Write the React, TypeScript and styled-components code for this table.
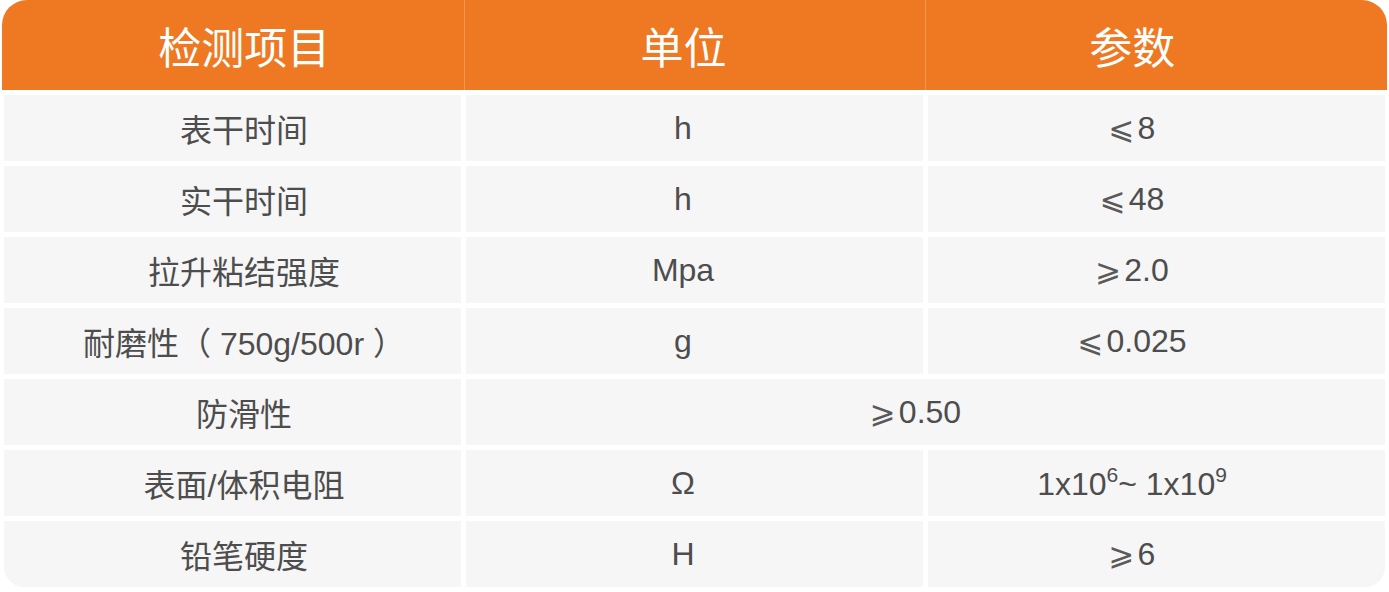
import React from 'react';
import styled, { createGlobalStyle } from 'styled-components';

const GlobalStyle = createGlobalStyle`
  html, body {
    margin: 0;
    padding: 0;
    background: #ffffff;
  }
`;

const Page = styled.div`
  width: 1389px;
  height: 592px;
  padding: 0 2px;
  box-sizing: border-box;
  font-family: "Liberation Sans", "Noto Sans CJK SC", sans-serif;
`;

// text in the reference sits a little off the cell centres
const colPad = ['0 0 0 23px', '0 23px 0 0', '0 49px 0 0'];

const Header = styled.div`
  display: grid;
  grid-template-columns: 1fr 1fr 1fr;
  height: 90px;
  background: #ee7922;
  border-radius: 25px 25px 0 0;
  overflow: hidden;
`;

const HeadCell = styled.div<{ $col: number }>`
  display: flex;
  align-items: center;
  justify-content: center;
  color: #ffffff;
  font-family: "Noto Sans CJK SC", sans-serif;
  font-size: 43px;
  padding: ${(p) => colPad[p.$col]};
  border-left: ${(p) => (p.$col === 0 ? 'none' : '1px solid rgba(255, 255, 255, 0.22)')};
`;

const Body = styled.div`
  display: grid;
  grid-template-columns: repeat(3, 457px);
  grid-auto-rows: 66px;
  column-gap: 5px;
  row-gap: 5px;
  padding: 5px 2px 0;
`;

const Cell = styled.div<{ $col: number; $span?: number; $corner?: 'left' | 'right' }>`
  display: flex;
  align-items: center;
  justify-content: center;
  box-sizing: border-box;
  background: #f6f6f6;
  color: #4d4d4d;
  font-size: 32px;
  padding: ${(p) => (p.$span ? '0 20px 0 0' : colPad[p.$col])};
  grid-column: ${(p) => (p.$span ? `span ${p.$span}` : 'auto')};
  border-radius: ${(p) =>
    p.$corner === 'left' ? '0 0 0 20px' : p.$corner === 'right' ? '0 0 20px 0' : '0'};
`;

const Value = styled.span`
  white-space: nowrap;
`;

const Sym = styled.span`
  font-family: "DejaVu Sans", sans-serif;
  font-size: 31px;
  color: #5a5a5a;
  margin-right: 3px;
`;

const Sup = styled.sup`
  font-size: 21px;
  line-height: 1;
  vertical-align: 13px;
`;

type Row = { name: string; unit?: React.ReactNode; value: React.ReactNode; merged?: boolean };

const le = (n: string) => (
  <Value>
    <Sym>⩽</Sym>
    {n}
  </Value>
);
const ge = (n: string) => (
  <Value>
    <Sym>⩾</Sym>
    {n}
  </Value>
);

const rows: Row[] = [
  { name: '表干时间', unit: 'h', value: le('8') },
  { name: '实干时间', unit: 'h', value: le('48') },
  { name: '拉升粘结强度', unit: 'Mpa', value: ge('2.0') },
  { name: '耐磨性（ 750g/500r ）', unit: 'g', value: le('0.025') },
  { name: '防滑性', value: ge('0.50'), merged: true },
  {
    name: '表面/体积电阻',
    unit: 'Ω',
    value: (
      <Value>
        1x10<Sup>6</Sup>~ 1x10<Sup>9</Sup>
      </Value>
    ),
  },
  { name: '铅笔硬度', unit: 'H', value: ge('6') },
];

function App() {
  return (
    <Page>
      <GlobalStyle />
      <Header>
        <HeadCell $col={0}>检测项目</HeadCell>
        <HeadCell $col={1}>单位</HeadCell>
        <HeadCell $col={2}>参数</HeadCell>
      </Header>
      <Body>
        {rows.map((r, i) => {
          const last = i === rows.length - 1;
          return (
            <React.Fragment key={r.name}>
              <Cell $col={0} $corner={last ? 'left' : undefined}>
                {r.name}
              </Cell>
              {r.merged ? (
                <Cell $col={1} $span={2}>
                  {r.value}
                </Cell>
              ) : (
                <>
                  <Cell $col={1}>{r.unit}</Cell>
                  <Cell $col={2} $corner={last ? 'right' : undefined}>
                    {r.value}
                  </Cell>
                </>
              )}
            </React.Fragment>
          );
        })}
      </Body>
    </Page>
  );
}

export default App;
